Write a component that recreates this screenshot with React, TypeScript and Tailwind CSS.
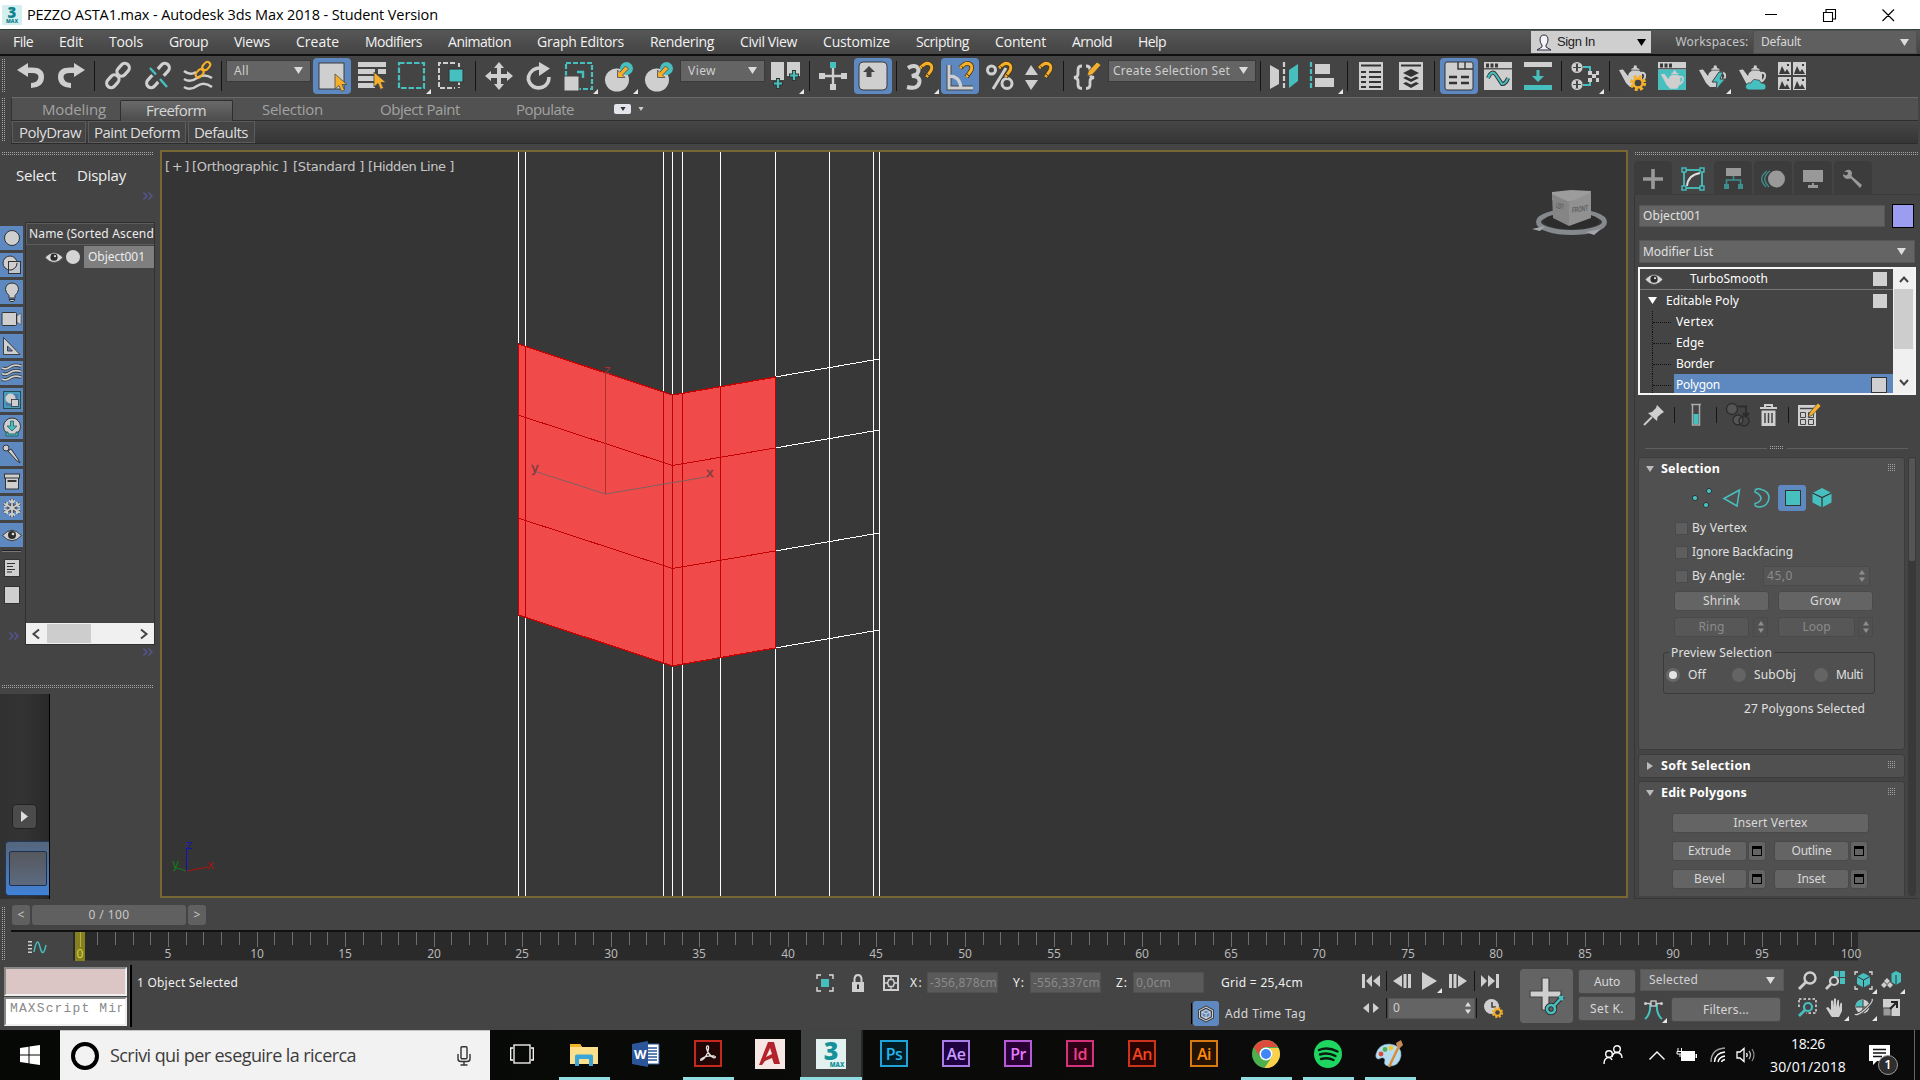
import { useLayoutEffect, useRef, type ReactNode } from 'react';

const G = '#cfcfcf';
const TEAL = '#47bfbf';
const OR = '#f5af2b';
const BG = '#444444';

/** Single-line label whose tracking is adjusted so that it spans `w` pixels. */
function T({ w, className = '', children }: { w: number; className?: string; children: string }) {
  const ref = useRef<HTMLSpanElement>(null);
  useLayoutEffect(() => {
    const el = ref.current;
    if (!el) return;
    el.style.letterSpacing = '0px';
    const natural = el.getBoundingClientRect().width;
    el.style.letterSpacing = `${(w - natural) / children.length}px`;
  }, [w, children]);
  return <span ref={ref} className={`inline-block shrink-0 whitespace-pre ${className}`}>{children}</span>;
}

function I({ children, className = 'w-[28px] h-[28px]', vb = '0 0 28 28' }: { children: ReactNode; className?: string; vb?: string }) {
  return <svg viewBox={vb} className={`block shrink-0 overflow-visible ${className}`} fill="none">{children}</svg>;
}

function Tool({ ml, flyout, children }: { ml: string; flyout?: boolean; children: ReactNode }) {
  return (
    <div className={`relative h-[28px] w-[28px] shrink-0 ${ml}`}>
      <I>{children}</I>
      {flyout && <Fly className="absolute -bottom-[4px] -right-[5px]" />}
    </div>
  );
}
function ToolOn({ ml, children }: { ml: string; children: ReactNode }) {
  return (
    <div className={`flex h-[36px] w-[38px] shrink-0 items-center justify-center rounded-[4px] bg-[#5d89c0] ${ml}`}>
      <I>{children}</I>
    </div>
  );
}
const Fly = ({ className = '' }: { className?: string }) => (
  <svg viewBox="0 0 5 5" className={`h-[5px] w-[5px] ${className}`}><path d="M5 0V5H0Z" fill="#e8e8e8" /></svg>
);
const Sep = ({ ml, h = 'h-[30px]' }: { ml: string; h?: string }) => <div className={`w-px shrink-0 bg-[#141414] ${h} ${ml}`} />;
const Down = ({ className = 'text-[#dcdcdc]' }: { className?: string }) => (
  <svg viewBox="0 0 9 7" className={`h-[7px] w-[9px] shrink-0 ${className}`}><path d="M0 0H9L4.5 7Z" fill="currentColor" /></svg>
);
const GripH = ({ className = '' }: { className?: string }) => (
  <div className={`flex h-[4px] flex-col gap-px ${className}`}>
    <div className="h-px bg-[repeating-linear-gradient(90deg,#a4a4a4_0_1px,#444_1px_2px)]" />
    <div className="h-px bg-[repeating-linear-gradient(90deg,#a4a4a4_0_1px,#444_1px_2px)]" />
  </div>
);
const GripV = ({ className = '' }: { className?: string }) => (
  <div className={`flex w-[4px] shrink-0 gap-px ${className}`}>
    <div className="w-px bg-[repeating-linear-gradient(180deg,#a4a4a4_0_1px,#444_1px_2px)]" />
    <div className="w-px bg-[repeating-linear-gradient(180deg,#a4a4a4_0_1px,#444_1px_2px)]" />
  </div>
);
const Chev = ({ className = '' }: { className?: string }) => (
  <I vb="0 0 10 8" className={`h-[8px] w-[10px] ${className}`}><path d="M.5 .5L4 4L.5 7.5M5.5 .5L9 4L5.5 7.5" stroke="#56569a" strokeWidth="1.3" /></I>
);

const Cursor = ({ x = 16, y = 12 }: { x?: number; y?: number }) => (
  <path transform={`translate(${x} ${y})`} d="M0 0V15L4 11.5L6.5 17.5L9.5 16L7 10.5H12Z" fill={OR} stroke="#4a4a4a" strokeWidth=".8" />
);
const Magnet = ({ x, y }: { x: number; y: number }) => (
  <g transform={`translate(${x} ${y})`}>
    <path d="M2 6L6 2.5Q10 0 13 3Q15 6 12 10L8.5 15" stroke="#4a3510" strokeWidth="4.6" />
    <path d="M2 6L6 2.5Q10 0 13 3Q15 6 12 10L8.5 15" stroke={OR} strokeWidth="3" />
    <path d="M3.6 4.2L5.2 6.2M9 12.2L11.4 14" stroke="#4a3510" strokeWidth="1" />
  </g>
);
const Chain = ({ c = G }: { c?: string }) => (
  <g stroke={c} strokeWidth="3.2">
    <rect x="-4.5" y="-8" width="9" height="14" rx="4.5" transform="translate(18.5 8.5) rotate(42)" />
    <rect x="-4.5" y="-6" width="9" height="14" rx="4.5" transform="translate(9.5 18.5) rotate(42)" />
  </g>
);
const Waves = () => (
  <g stroke={G} strokeWidth="2.6">
    <path d="M0 9Q6 14 12 10" /><path d="M0 17Q6 21 13 16T28 16" /><path d="M0 25Q6 29 13 24T28 25" />
  </g>
);
const Teapot = ({ c = G }: { c?: string }) => (
  <g>
    <path d="M1 5L5 4.5L10 11L11 8L14 5.5H21L24 8V16L20 22H12L8 18Z" fill={c} />
    <path d="M13 4.8Q13 3.5 15.5 3L16 .5H18.5L19 3Q21.5 3.5 22 4.8Z" fill={c} />
    <path d="M22.5 8Q28 7 27 12Q26 16 21.5 17" stroke={c} strokeWidth="2" />
  </g>
);
const Gear = ({ cx, cy, r }: { cx: number; cy: number; r: number }) => (
  <g>
    <circle cx={cx} cy={cy} r={r} stroke={OR} strokeWidth={r * 0.5} strokeDasharray={`${r * 0.45} ${r * 0.335}`} />
    <circle cx={cx} cy={cy} r={r * 0.7} fill="#444" stroke={OR} strokeWidth={r * 0.38} />
  </g>
);
const Place = () => (
  <>
    <ellipse cx="12" cy="18" rx="12" ry="11.5" fill={G} />
    <circle cx="21.5" cy="6.5" r="6.5" fill={TEAL} />
    <path d="M20.5 4L23.5 7L17.5 13L20 15.5H12.5V8L14.8 10.3Z" fill={OR} stroke="#555" strokeWidth=".9" />
  </>
);
const Win = () => (
  <><rect x="0" y="0" width="28" height="28" fill={G} /><path d="M2 1.5h3v4h-3zM6.5 1.5h3v4h-3zM11 1.5h3v4h-3z" fill="#3a3a3a" /><path d="M0 6.8H28" stroke="#3a3a3a" strokeWidth="1.2" /></>
);
const Eye = ({ className = 'h-[11px] w-[18px]' }: { className?: string }) => (
  <I vb="0 0 18 11" className={className}>
    <path d="M0 5.5Q9-4.5 18 5.5Q9 15.5 0 5.5Z" fill="#d6d6d6" stroke="#333" strokeWidth=".6" /><circle cx="9" cy="5.2" r="3.6" fill="#2c2c2c" /><circle cx="10" cy="4.2" r="1.1" fill="#ddd" />
  </I>
);

const MENU: [string, number, string][] = [
  ['File', 20, 'w-[20px]'], ['Edit', 24, 'w-[24px]'], ['Tools', 34, 'w-[34px]'], ['Group', 39, 'w-[39px]'],
  ['Views', 36, 'w-[36px]'], ['Create', 43, 'w-[43px]'], ['Modifiers', 57, 'w-[57px]'], ['Animation', 63, 'w-[63px]'],
  ['Graph Editors', 87, 'w-[87px]'], ['Rendering', 64, 'w-[64px]'], ['Civil View', 57, 'w-[57px]'], ['Customize', 67, 'w-[67px]'],
  ['Scripting', 53, 'w-[53px]'], ['Content', 51, 'w-[51px]'], ['Arnold', 40, 'w-[40px]'], ['Help', 28, 'w-[28px]'],
];

function TitleBar() {
  return (
    <div className="flex h-[29px] items-center bg-white text-black">
      <div className="ml-[2px] flex h-[20px] w-[20px] flex-col items-center bg-[#d5eef0] font-['Open_Sans'] font-extrabold text-[#12838c]">
        <span className="text-[15px] leading-[14px]">3</span>
        <span className="text-[5px] leading-[5px]">MAX</span>
      </div>
      <T w={411} className="ml-[5px] font-['Open_Sans'] text-[14.5px]">PEZZO ASTA1.max - Autodesk 3ds Max 2018 - Student Version</T>
      <I vb="0 0 130 14" className="ml-auto mr-[25px] h-[14px] w-[130px]">
        <g stroke="#000" strokeWidth="1.1">
          <path d="M0 6.5H12M58.500 4.500H67.500V13.500H58.500ZM61 4.500V1.500H70.500V11H67.500M117.500 1.500L129 13M129 1.500L117.500 13" />
        </g>
      </I>
    </div>
  );
}

function MenuBar() {
  return (
    <div className="flex h-[27px] items-center border-b-2 border-[#101010] border-t border-t-[#33443b] bg-gradient-to-b from-[#575757] to-[#444] font-['Open_Sans'] text-[14px] text-[#f2f2f2]">
      <div className="flex gap-[26px] pb-[2px] pl-[13px]">
        {MENU.map(([m, w, c]) => <div key={m} className={c}><T w={w}>{m}</T></div>)}
      </div>
      <div className="ml-auto flex h-[22px] w-[120px] items-center bg-[#cfcfcf] text-[#222]">
        <I vb="0 0 16 17" className="ml-[5px] h-[17px] w-[16px]">
          <path d="M8 1Q12 1 12 6Q12 9 10 11V13L15 16H1L6 13V11Q4 9 4 6Q4 1 8 1Z" fill="#f4f4f8" stroke="#2c2c3c" />
        </I>
        <T w={38} className="ml-[5px] font-['Liberation_Sans'] text-[13px]">Sign In</T>
        <Down className="ml-auto mr-[5px] text-black" />
      </div>
      <div className="flex h-full w-[102px] items-center justify-center pl-[20px] font-['Noto_Sans'] text-[12px] text-[#c4c4c4]"><T w={73}>Workspaces:</T></div>
      <div className="mr-[3px] flex h-[24px] w-[164px] items-center justify-between border border-[#505050] bg-[#5f5f5f] px-[7px] font-['Noto_Sans'] text-[12px] text-[#d8d8d8]"><T w={40}>Default</T><Down /></div>
    </div>
  );
}

function Combo({ cls, w, children }: { cls: string; w: number; children: string }) {
  return (
    <div className={`mb-[10px] flex h-[22px] shrink-0 items-center justify-between border border-[#3a3a3a] bg-[#646464] pb-[1px] pl-[7px] pr-[7px] font-['Noto_Sans'] text-[12px] text-[#cfcfcf] ${cls}`}>
      <T w={w}>{children}</T><Down />
    </div>
  );
}

function MainToolbar() {
  return (
    <div className="flex h-[40px] items-center bg-[#444]">
      <GripV className="ml-[2px] h-[34px]" />
      <Tool ml="ml-[11px]"><path d="M0 8L11 1V5.5H15Q27 5.500 27 15Q27 25 14 26V21Q21.500 20.500 21.500 15Q21.500 11 15 11H11V15Z" fill={G} /></Tool>
      <Tool ml="ml-[12px]"><path d="M28 8L17 1V5.500H13Q1 5.500 1 15Q1 25 14 26V21Q6.500 20.500 6.500 15Q6.500 11 13 11H17V15Z" fill={G} /></Tool>
      <Sep ml="ml-[9px]" />
      <Tool ml="ml-[9px]"><Chain /></Tool>
      <Tool ml="ml-[12px]"><Chain /><path d="M4 2L25 26" stroke={BG} strokeWidth="8" /><path d="M6 6L12 12.500M16 17L23 25" stroke={TEAL} strokeWidth="2.400" /></Tool>
      <Tool ml="ml-[12px]"><Waves /><g transform="translate(10 -1) scale(.64)"><Chain c={OR} /></g></Tool>
      <Sep ml="ml-[9px]" />
      <Combo cls="ml-[4px] w-[85px]" w={15}>All</Combo>
      <ToolOn ml="ml-[2px]"><rect x="1" y="1" width="25" height="26" fill={G} stroke="#3a3a3a" /><Cursor x={17} y={12} /></ToolOn>
      <Tool ml="ml-[7px]"><path d="M0 0H28V5H0ZM0 7H17V12H0ZM0 14H17V19H0ZM0 21H17V26H0ZM20 7H28V12H20Z" fill={G} /><Cursor x={16} y={10} /></Tool>
      <Tool ml="ml-[12px]" flyout><rect x="1" y="1" width="25" height="25" stroke={TEAL} strokeWidth="2.200" strokeDasharray="5.500 2" /></Tool>
      <Tool ml="ml-[12px]"><path d="M17 1H1V26H17" stroke={G} strokeWidth="2" strokeDasharray="5 2" /><path d="M21 1V26" stroke={G} strokeWidth="2" strokeDasharray="4 2" /><rect x="11" y="7" width="14" height="13" fill={TEAL} stroke="#333" /></Tool>
      <Sep ml="ml-[9px]" />
      <Tool ml="ml-[9px]"><path d="M14 0L19 6H16V12H22V9L28 14L22 19V16H16V22H19L14 28L9 22H12V16H6V19L0 14L6 9V12H12V6H9Z" fill={G} /></Tool>
      <Tool ml="ml-[12px]"><path d="M17 6.500Q13 5 8 8Q1 14 4.500 20.500Q9 28 18 25Q24 22 24 15" stroke={G} strokeWidth="3.600" /><path d="M14 0L25 6.500L14 14Z" fill={G} /></Tool>
      <Tool ml="ml-[12px]" flyout><rect x="1" y="1" width="26" height="26" stroke={TEAL} strokeWidth="2.200" strokeDasharray="5 2" /><rect x="-1" y="14" width="15" height="15" fill={G} stroke="#444" /><path d="M12 10H18V16" stroke={TEAL} strokeWidth="2.400" /></Tool>
      <Tool ml="ml-[12px]" flyout><Place /></Tool>
      <Tool ml="ml-[12px]"><Place /></Tool>
      <Combo cls="ml-[7px] w-[85px]" w={28}>View</Combo>
      <Tool ml="ml-[6px]" flyout><path d="M0 0H13V18H0ZM16 0H29V14H16Z" fill={G} /><path d="M7 16V27M2 21.500H12M23 8V19M18 13.500H28" stroke="#333" strokeWidth="4" /><path d="M7 17V26M3 21.500H11M23 9V18M19 13.500H27" stroke={TEAL} strokeWidth="2.200" /></Tool>
      <Sep ml="ml-[10px]" />
      <Tool ml="ml-[9px]"><path d="M14 3V25M3 14H25" stroke={G} strokeWidth="2.400" /><path d="M0 11H6V17H0ZM22 11H28V17H22ZM11 22H17V28H11Z" fill={G} /><rect x="11" y="0" width="6" height="6" fill={TEAL} /></Tool>
      <ToolOn ml="ml-[7px]"><rect x="0" y="0" width="28" height="28" rx="4" fill={G} stroke="#3a3a3a" /><path d="M10 4L16 10H12.500V15H7.500V10H4Z" fill="#444" /></ToolOn>
      <Sep ml="ml-[4px]" />
      <Tool ml="ml-[9px]" flyout><path d="M2 6Q7 2.500 11 5Q14 8 11 12L6 14Q14 14 13.500 20Q12 28 1 25" stroke={G} strokeWidth="4" /><Magnet x={12} y={0} /></Tool>
      <ToolOn ml="ml-[7px]"><path d="M3 3V26H27" stroke="#444" strokeWidth="5" /><path d="M3 3V26H27M3 14Q14 14 15 26" stroke={G} strokeWidth="3" /><Magnet x={12} y={0} /></ToolOn>
      <Tool ml="ml-[7px]"><circle cx="5.500" cy="8" r="4" stroke={G} strokeWidth="3" /><circle cx="21" cy="21.500" r="5" stroke={G} strokeWidth="3" /><path d="M20 6L7 27" stroke={G} strokeWidth="3" /><Magnet x={11} y={0} /></Tool>
      <Tool ml="ml-[11px]"><path d="M6 3L13 13H0ZM0 18H13L6 28Z" fill={G} /><Magnet x={12} y={0} /></Tool>
      <Sep ml="ml-[10px]" />
      <Tool ml="ml-[9px]"><path d="M9 4Q5 4 5 8V12Q5 15 1 15.500Q5 16 5 19V23Q5 26.500 9 26.500M13 4Q17 4 17 8V12Q17 15 21 15.500Q17 16 17 19V23Q17 26.500 13 26.500" stroke={G} strokeWidth="2.800" /><path d="M14 14L15.500 9L24 0L28 3L19.500 12.500Z" fill={OR} stroke="#444" strokeWidth=".8" /></Tool>
      <Combo cls="ml-[7px] w-[148px] !pl-[4px]" w={117}>Create Selection Set</Combo>
      <Sep ml="ml-[4px]" />
      <Tool ml="ml-[9px]"><path d="M0 3L9 8V22L0 27Z" fill={G} /><path d="M14 0V28" stroke={G} strokeWidth="2.200" strokeDasharray="5 2" /><path d="M19 8L28 2V19L19 26Z" fill={TEAL} /></Tool>
      <Tool ml="ml-[12px]" flyout><path d="M1 0V28" stroke={TEAL} strokeWidth="2.200" strokeDasharray="5 2" /><path d="M5 2H20V12H5ZM5 16H24V25H5Z" fill={G} /></Tool>
      <Sep ml="ml-[9px]" />
      <Tool ml="ml-[9px]"><rect x="2" y="0" width="24" height="28" fill={G} /><path d="M4 3.500H24" stroke="#333" strokeWidth="2" /><path d="M4 10H9M12 10H24M4 15H9M12 15H24M4 20H9M12 20H24M4 25H9M12 25H24" stroke="#333" strokeWidth="2" /></Tool>
      <Tool ml="ml-[12px]"><rect x="2" y="0" width="24" height="28" fill={G} /><path d="M4 3.500H24" stroke="#333" strokeWidth="2" /><path d="M14 7L22 11L14 15L6 11ZM6 16L9 14.500L14 17L19 14.500L22 16L14 20ZM6 21.500L9 20L14 22.500L19 20L22 21.500L14 26Z" fill="#333" /></Tool>
      <Sep ml="ml-[9px]" />
      <ToolOn ml="ml-[5px]"><rect x="0" y="0" width="28" height="28" rx="2" fill={G} stroke="#333" /><path d="M13 0V7H28M20 0V7" stroke="#333" strokeWidth="1.400" /><path d="M4 15H12M16 15H24M4 21H12M16 21H24" stroke="#333" strokeWidth="2.600" /></ToolOn>
      <Tool ml="ml-[6px]"><Win /><path d="M4 16Q8 7 12 13T18 22Q22 22 24 16" stroke="#333" strokeWidth="4" /><path d="M4 16Q8 7 12 13T18 22Q22 22 24 16" stroke={TEAL} strokeWidth="2.200" /></Tool>
      <Tool ml="ml-[12px]"><rect width="28" height="5" fill={G} /><rect y="23" width="28" height="5" fill={TEAL} /><path d="M12.500 8H15.500V14H20L14 20L8 14H12.500Z" fill={TEAL} /></Tool>
      <Sep ml="ml-[9px]" />
      <Tool ml="ml-[9px]" flyout><g stroke={TEAL} strokeWidth="2"><path d="M12 5H19V11M12 23H19V17" /></g><circle cx="6" cy="5.500" r="4.800" fill="#444" stroke={G} strokeWidth="1.600" /><circle cx="6" cy="22.500" r="4.800" fill="#444" stroke={G} strokeWidth="1.600" /><path d="M2 2H5V5H2ZM7 6H10V9H7ZM7 2H10V5H7ZM2 6H5V9H2ZM2 19H5V22H2ZM7 23H10V26H7ZM7 19H10V22H7ZM2 23H5V26H2ZM17 9H21V13H17ZM25 9H28V13H25ZM21 12H25V16H21ZM17 16H21V20H17ZM25 16H28V20H25Z" fill={G} /></Tool>
      <Sep ml="ml-[10px]" />
      <Tool ml="ml-[8px]"><g transform="translate(0 3)"><Teapot /></g><Gear cx={20} cy={21} r={6.500} /></Tool>
      <Tool ml="ml-[12px]"><Win /><rect y="7.500" width="28" height="20.500" fill={TEAL} /><g transform="translate(2 8) scale(.85)"><Teapot /></g></Tool>
      <Tool ml="ml-[12px]" flyout><g transform="translate(0 3)"><Teapot /></g><path d="M21 10L14 20H19L18 28L27 17H22L25 10Z" fill={TEAL} stroke="#444" /></Tool>
      <Tool ml="ml-[12px]"><g transform="translate(0 3)"><Teapot /></g><path d="M11 28Q6 27 8 23Q10 20 13 21Q15 16 19 18Q22 17 23 21Q28 21 28 25Q28 28 25 28Z" fill={TEAL} stroke="#444" strokeWidth=".8" /></Tool>
      <Tool ml="ml-[12px]"><path d="M0 0H13V13H0ZM15 0H28V13H15ZM0 15H13V28H0ZM15 15H28V28H15Z" fill={G} /><path d="M1 12L4 4L7 10L9 7L12 12ZM16 12L19 4L22 10L24 7L27 12ZM1 27L4 19L7 25L9 22L12 27ZM16 27L19 19L22 25L24 22L27 27Z" fill="#3a3a3a" /><path d="M9 2h2v2h-2zM24 2h2v2h-2zM9 17h2v2h-2zM24 17h2v2h-2z" fill="#3a3a3a" /></Tool>
    </div>
  );
}

function Ribbon() {
  return (
    <div className="flex h-[48px] bg-[#444] pt-[1px] font-['Open_Sans']">
      <GripV className="ml-[2px] mt-[1px] h-[44px]" />
      <div className="ml-[5px] mr-[2px] flex-1">
        <div className="flex h-[24px] border-b border-l border-t border-b-[#2e2e2e] border-l-[#333] border-t-[#6a6a6a] bg-[#515151] text-[15px] leading-[23px] text-[#a2a2a2]">
          <div className="w-[108px] pl-[30px]"><T w={64}>Modeling</T></div>
          <div className="mt-[2px] h-[22px] w-[113px] rounded-t-[2px] border border-b-0 border-[#2e2e2e] bg-gradient-to-b from-[#6a6a6a] to-[#4a4a4a] pl-[25px] leading-[18px] text-[#d6d6d6]"><T w={60}>Freeform</T></div>
          <div className="w-[118px] pl-[29px]"><T w={61}>Selection</T></div>
          <div className="w-[136px] pl-[29px]"><T w={80}>Object Paint</T></div>
          <div className="w-[115px] pl-[29px]"><T w={58}>Populate</T></div>
          <div className="ml-[12px] mt-[6px] flex h-[10px] w-[17px] items-center justify-center rounded-[2px] bg-[#e4e4ec]"><Down className="!h-[4px] !w-[6px] text-[#333]" /></div>
          <Down className="ml-[7px] mt-[9px] !h-[4px] !w-[6px] text-[#ccc]" />
        </div>
        <div className="flex h-[23px] gap-[2px] border-b border-[#2c2c2c] bg-gradient-to-b from-[#474747] to-[#353535] pl-[1px] text-[15px] leading-[20px] text-[#dedede]">
          <div className="h-[22px] w-[74px] border border-[#5c5c5c] bg-[#444] pl-[6px]"><T w={62}>PolyDraw</T></div>
          <div className="h-[22px] w-[98px] border border-[#5c5c5c] bg-[#444] pl-[5px]"><T w={86}>Paint Deform</T></div>
          <div className="h-[22px] w-[67px] border border-[#5c5c5c] bg-[#444] pl-[5px]"><T w={54}>Defaults</T></div>
        </div>
      </div>
    </div>
  );
}

const FILTERS: ReactNode[] = [
  <circle cx="12" cy="12" r="7.500" fill={G} stroke="#333" />,
  <><circle cx="10" cy="10" r="7" fill={G} stroke="#333" /><rect x="8.500" y="8.500" width="12" height="12" fill={G} fillOpacity=".85" stroke="#333" /><path d="M17 10A7 7 0 0 1 9 17" stroke="#333" /></>,
  <><path d="M12 3Q18.500 3.500 18.500 9.500Q18 13 15 15.500V18H9V15.500Q6 13 5.500 9.500Q5.500 3.500 12 3Z" fill={G} stroke="#333" /><path d="M9 19.500H15L13.500 21.500H10.500Z" fill={G} stroke="#333" /></>,
  <><rect x="2" y="5.500" width="14.500" height="13" rx="1" fill={G} stroke="#333" /><path d="M17 9L21 6V18L17 15Z" fill={G} stroke="#333" strokeWidth=".5" /></>,
  <path d="M3.500 3.500L20 20.500H3.500ZM7.500 12V17H12.500Z" fill={G} fillRule="evenodd" stroke="#333" strokeWidth=".9" />,
  <g><g stroke="#333" strokeWidth="3.400"><path d="M2 7Q6 9 10 6T21 5M2 12.500Q6 14.500 10 11.500T21 10.500M2 18Q6 20 10 17T21 16" /></g><g stroke={G} strokeWidth="1.800"><path d="M2 7Q6 9 10 6T21 5M2 12.500Q6 14.500 10 11.500T21 10.500M2 18Q6 20 10 17T21 16" /></g></g>,
  <><rect x="3.500" y="3.500" width="17" height="17" fill="#4b79ad" stroke="#1f4f55" /><rect x="5" y="5" width="14" height="14" stroke={TEAL} /><circle cx="10.500" cy="10.500" r="5" fill={G} /><rect x="11.500" y="11.500" width="7" height="7" fill={G} stroke="#333" strokeWidth=".8" /></>,
  <><circle cx="12" cy="11.500" r="8.500" fill={G} stroke="#333" /><path d="M10.500 6H13.500V11H17L12 16L7 11H10.500Z" fill={TEAL} stroke="#1f4f55" strokeWidth=".7" /><path d="M6 17H8V19H16V17H18V21H6Z" fill={TEAL} stroke="#1f4f55" strokeWidth=".8" /></>,
  <><path d="M8 9L11 7L18 17L20 21L16 18Z" fill={G} stroke="#333" /><circle cx="6" cy="6" r="3" fill={G} stroke="#333" /></>,
  <><rect x="5.500" y="8" width="13" height="12" fill={G} stroke="#333" /><rect x="4.500" y="5" width="15" height="4" fill={G} stroke="#333" /><path d="M7.500 12H16.500" stroke="#333" strokeWidth="2" /></>,
  <g><g stroke="#444" strokeWidth="3.600"><path d="M12 3V21M4 7.500L20 16.500M4 16.500L20 7.500" /></g><g stroke={G} strokeWidth="1.800"><path d="M12 3V21M4 7.500L20 16.500M4 16.500L20 7.500M9 4.500L12 7L15 4.500M9 19.500L12 17L15 19.500M4 11L7.500 9.500L7 6M20 11L16.500 9.500L17 6M4 13L7.500 14.500L7 18M20 13L16.500 14.500L17 18" /></g></g>,
  <><path d="M2.500 12.500Q12 2 21.500 12.500Q12 23 2.500 12.500Z" fill={G} stroke="#333" /><circle cx="12" cy="12" r="4" fill="#2c2c2c" /><circle cx="13" cy="11" r="1.300" fill="#ddd" /></>,
];

function LeftPanel() {
  return (
    <div className="flex w-[160px] shrink-0 flex-col font-['Noto_Sans'] text-[#ececec]">
      <GripH className="ml-[2px] mt-[8px] w-[151px]" />
      <div className="mt-[8px] flex h-[22px] items-center font-['Open_Sans'] text-[15px] text-[#f0f0f0]">
        <T w={40} className="ml-[16px]">Select</T><T w={49} className="ml-[21px]">Display</T>
      </div>
      <Chev className="ml-[143px] mt-[6px]" />
      <div className="mt-[22px] flex h-[423px]">
        <div className="mt-[4px] w-[25px]">
          {FILTERS.map((f, i) => <div key={i} className="mb-[3px] h-[24px] w-[23px] bg-[#5d89c0]"><I vb="0 0 24 24" className="h-[24px] w-[24px]">{f}</I></div>)}
          <div className="ml-[2px] mt-[1px] h-[2px] w-[19px] border-t border-[#222] bg-[#777]" />
          <I vb="0 0 16 18" className="ml-[4px] mt-[7px] h-[18px] w-[16px]"><rect x=".5" y=".5" width="15" height="17" fill={G} stroke="#333" /><path d="M3 4.500H11M3 7.500H9M3 10.500H11M3 13H8" stroke="#333" /></I>
          <div className="ml-[4px] mt-[9px] h-[18px] w-[16px] border border-[#333] bg-[#cfcfcf]" />
          <Chev className="ml-[9px] mt-[28px]" />
        </div>
        <div className="flex w-[130px] flex-col overflow-hidden border border-[#303030] text-[12px]">
          <div className="h-[22px] overflow-hidden border border-r-0 border-[#5c5c5c] pl-[2px] leading-[19px]"><T w={125}>Name (Sorted Ascend</T></div>
          <div className="mt-[1px] flex h-[22px] items-center">
            <Eye className="ml-[19px] h-[11px] w-[18px]" />
            <div className="ml-[3px] h-[14px] w-[14px] rounded-full bg-[#d4d4d4]" />
            <div className="ml-[4px] h-[22px] flex-1 bg-[#7f7f7f] pl-[4px] leading-[22px]"><T w={57}>Object001</T></div>
          </div>
          <div className="mt-auto flex h-[21px] items-center bg-[#f0f0f0]">
            <I vb="0 0 8 10" className="ml-[6px] h-[10px] w-[8px]"><path d="M7 .5L1.500 5L7 9.500" stroke="#444" strokeWidth="2" /></I>
            <div className="ml-[7px] h-[19px] w-[44px] bg-[#cdcdcd]" />
            <I vb="0 0 8 10" className="ml-auto mr-[6px] h-[10px] w-[8px]"><path d="M1 .5L6.500 5L1 9.500" stroke="#444" strokeWidth="2" /></I>
          </div>
        </div>
      </div>
      <Chev className="ml-[143px] mt-[3px]" />
      <GripH className="ml-[2px] mt-[29px] w-[151px]" />
      <div className="mt-[5px] flex w-[50px] flex-1 flex-col border-r border-black bg-gradient-to-r from-[#313131] via-[#333] to-[#292929]">
        <div className="ml-[12px] mt-[110px] flex h-[25px] w-[25px] items-center justify-center rounded-[4px] border border-[#222] bg-[#4b4b4b]"><I vb="0 0 7 11" className="h-[11px] w-[7px]"><path d="M0 0L7 5.500L0 11Z" fill="#ddd" /></I></div>
        <div className="ml-[5px] mt-[12px] h-[55px] rounded-l-[4px] border border-r-0 border-[#24385a] bg-gradient-to-b from-[#55657c] to-[#3f82d8] pl-[3px] pt-[9px]"><div className="h-[35px] w-[38px] rounded-[2px] border border-[#20304a] bg-gradient-to-b from-[#55585e] to-[#5c6a80]" /></div>
      </div>
    </div>
  );
}

const VX = [518.5, 525.5, 663.5, 672.5, 682.5, 720.5, 775.5, 829.5, 873.5, 879.5];
const VR = [[518.5, 344, 615], [525.5, 346, 617], [663.5, 392, 663], [672.5, 395, 666], [682.5, 393, 664], [720.5, 387, 658], [775.5, 377, 648]];

function Viewport() {
  return (
    <div className="relative mb-[1px] mt-[6px] w-[1468px] shrink-0 overflow-hidden border-2 border-[#776735] bg-[#353535]">
      <svg viewBox="162 152 1464 745" className="absolute inset-0 h-[745px] w-[1464px]" fill="none">
        <rect x="518" y="150" width="362" height="750" fill="#383838" />
        <g stroke="#fff" strokeWidth="1" shapeRendering="crispEdges">
          {VX.map((x) => <path key={x} d={`M${x} 150V900`} />)}
          {[377, 448, 551, 648].map((y) => <path key={y} d={`M775 ${y}L879 ${y - 18}`} />)}
        </g>
        <path d="M518 344L672.500 395L776 377V648L672.500 666L518 615Z" fill="#f04a4a" />
        <g stroke="#c40000" strokeWidth="1" shapeRendering="crispEdges">
          <path d="M518.500 344L672.500 395L775.500 377V648L672.500 666L518.500 615Z" strokeWidth="1.300" />
          <path d="M518 415L672.500 465.500L775 448M518 518L672.500 568.500L775 551" />
          {VR.map(([x, a, b]) => <path key={x} d={`M${x} ${a}V${b}`} />)}
        </g>
        <path d="M605.500 372V494" stroke="#b03030" />
        <path d="M534 471L605.500 494L706 477" stroke="#806060" />
        <g fontFamily="DejaVu Sans" fontSize="13">
          <text x="531" y="472" fill="#7a4040" stroke="#7a4040" strokeWidth=".4">y</text><text x="706" y="477" fill="#7a4040" stroke="#7a4040" strokeWidth=".4">x</text><text x="604" y="374" fontSize="12" fill="#b03030">z</text>
          <text x="186" y="849" fontSize="12" fill="#1515b0">z</text><text x="172" y="868" fontSize="12" fill="#157a15">y</text><text x="207" y="869" fontSize="12" fill="#a01515">x</text>
        </g>
        <path d="M186.500 871V848" stroke="#1010c0" /><path d="M187 871L208 867" stroke="#b01010" /><path d="M186 871L174 867" stroke="#108010" />
        <ellipse cx="1571.500" cy="222" rx="33" ry="10.500" stroke="#85888c" strokeWidth="5" />
        <ellipse cx="1571.500" cy="221" rx="28" ry="8" fill="#2c2c2c" />
        <path d="M1532 229L1545 226L1540 231ZM1601 229L1594 235L1586 232Z" fill="#a4a7aa" />
        <path d="M1552 192L1571 190L1591 191L1590 199L1568 202L1552 200Z" fill="#9c9c9c" />
        <path d="M1552 194L1569 202V226L1553 218Z" fill="#858585" />
        <path d="M1569 202L1591 193V218L1569 226Z" fill="#919191" />
        <g fontFamily="Liberation Sans" fontSize="8" fontWeight="700" fill="#5e5e5e">
          <text transform="translate(1556 208) skewY(14)" textLength="8" lengthAdjust="spacingAndGlyphs">LEFT</text><text transform="translate(1572 213) skewY(-9)" textLength="16" lengthAdjust="spacingAndGlyphs">FRONT</text>
        </g>
      </svg>
      <div className="relative flex pl-[3px] pt-[5px] font-['DejaVu_Sans'] text-[13px] leading-[19px] text-[#c6c6c6]">
        <T w={23}>[ + ]</T><T w={95} className="ml-[4px]">[Orthographic ]</T><T w={71} className="ml-[6px]">[Standard ]</T><T w={86} className="ml-[4px]">[Hidden Line ]</T>
      </div>
    </div>
  );
}

const TABS: ReactNode[] = [
  <path d="M2 12H22M12 2V22" stroke="#999" strokeWidth="3.600" />,
  <><rect x="3" y="3" width="18" height="18" stroke={TEAL} strokeWidth="1.800" /><path d="M6 19Q7 8 19 6" stroke="#e0e0e0" strokeWidth="2" /><g fill="#444" stroke={TEAL} strokeWidth="1.400"><rect x="1" y="1" width="4" height="4" /><rect x="19" y="1" width="4" height="4" /><rect x="1" y="19" width="4" height="4" /><rect x="19" y="19" width="4" height="4" /></g></>,
  <><rect x="5" y="1" width="15" height="8" fill="#999" /><path d="M12.500 9V13M5.500 18V13H19.500V18" stroke="#3f8e8e" strokeWidth="1.600" /><path d="M3 17H8V22H3ZM17 17H22V22H17Z" fill="#3f8e8e" /></>,
  <><circle cx="15.500" cy="12" r="8.500" fill="#999" /><path d="M9 4Q-1 11 8 20M6 4Q-4 11 5 20" stroke="#3f8e8e" strokeWidth="1.300" /></>,
  <><rect x="2" y="3" width="20" height="12" fill="#999" /><path d="M11 16H13V18H17V21H7V18H11Z" fill="#999" /></>,
  <path d="M3 4.500L6 3Q10 2 11 6L10.500 9L21 18L19 21L10 11.500L6 12Q2 11 2 7L5 8.500L7 7L6.500 5Z" fill="#999" />,
];

function Btn({ cls, w, dim, children }: { cls: string; w: number; dim?: boolean; children: string }) {
  return <div className={`flex h-[20px] shrink-0 items-center justify-center rounded-[3px] border border-[#4a4a4a] ${dim ? 'bg-[#575757] text-[#8b8b8b]' : 'bg-[#646464] text-[#d8d8d8]'} ${cls}`}><T w={w}>{children}</T></div>;
}
const Spin = ({ className = '' }: { className?: string }) => (
  <I vb="0 0 6 12" className={`h-[12px] w-[6px] ${className}`}><path d="M3 0L6 4.500H0ZM0 7.500H6L3 12Z" fill="#8e8e8e" /></I>
);
const Dots = () => (
  <I vb="0 0 8 7" className="mb-[3px] ml-auto mr-[8px] h-[7px] w-[8px]">
    <path d="M0 .5H8M0 2.500H8M0 4.500H8M0 6.500H8" stroke="#a0a0a0" strokeDasharray="1 1" />
  </I>
);
function Head({ w, open, children }: { w: number; open?: boolean; children: string }) {
  return (
    <div className="flex h-[22px] items-center font-bold text-white">
      <I vb="0 0 8 8" className="ml-[7px] h-[8px] w-[8px]"><path d={open ? 'M0 1H8L4 7Z' : 'M1 0V8L7 4Z'} fill="#bbb" /></I>
      <T w={w} className="ml-[7px] text-[12.5px]">{children}</T><Dots />
    </div>
  );
}
const Box = () => <div className="flex h-[20px] w-[18px] items-center justify-center rounded-[3px] border border-[#4a4a4a] bg-[#646464]"><div className="h-[10px] w-[10px] border border-t-[3px] border-black" /></div>;
const TSep = ({ ml }: { ml: string }) => <div className={`h-[16px] w-px bg-[#151515] ${ml}`} />;

function CommandPanel() {
  return (
    <div className="ml-[6px] flex w-[285px] shrink-0 flex-col font-['Noto_Sans'] text-[12px] text-[#e0e0e0]">
      <GripH className="ml-[1px] mt-[8px] w-[283px]" />
      <div className="mt-[5px] flex h-[33px] gap-[2px]">
        {TABS.map((t, i) => <div key={i} className={`flex w-[38px] items-center justify-center rounded-t-[4px] pt-[3px] ${i === 1 ? 'bg-[#444]' : 'bg-[#3c3c3c]'}`}><I vb="0 0 24 24" className="h-[24px] w-[24px]">{t}</I></div>)}
      </div>
      <div className="flex flex-1 flex-col overflow-hidden border border-b-[#363636] border-l-[#363636] border-r-transparent border-t-[#3c3c3c] pl-[4px]">
        <div className="mt-[9px] flex h-[24px] items-center">
          <div className="h-[22px] w-[246px] border border-[#565656] bg-[#646464] pl-[3px] leading-[20px]"><T w={58}>Object001</T></div>
          <div className="ml-[7px] h-[24px] w-[22px] border border-black bg-[#9c9cf0]" />
        </div>
        <div className="mt-[12px] flex h-[23px] w-[276px] items-center justify-between border border-[#565656] bg-[#646464] pl-[3px] pr-[8px]"><T w={70}>Modifier List</T><Down /></div>
        <div className="-ml-[1px] mt-[4px] flex h-[128px] w-[278px] border-2 border-[#f4f4f4] text-white">
          <div className="flex-1 overflow-hidden">
            <div className="flex h-[21px] items-center border-b border-[#777]"><Eye className="ml-[5px] h-[11px] w-[18px]" /><T w={78} className="ml-[27px]">TurboSmooth</T><div className="ml-auto mr-[6px] h-[14px] w-[14px] bg-[#d0d0d0]" /></div>
            <div className="flex h-[21px] items-center"><Down className="ml-[8px]" /><T w={73} className="ml-[9px]">Editable Poly</T><div className="ml-auto mr-[6px] h-[14px] w-[14px] bg-[#d0d0d0]" /></div>
            {([['Vertex', 38], ['Edge', 28], ['Border', 38], ['Polygon', 44]] as [string, number][]).map(([n, w]) => (
              <div key={n} className="flex h-[21px]">
                <div className="ml-[12px] h-[21px] w-[1px] border-l border-dotted border-[#111]" />
                <div className="mr-[3px] mt-[11px] h-0 w-[18px] border-t border-dotted border-[#111]" />
                <div className={`flex flex-1 items-center pl-[2px] ${n === 'Polygon' ? 'bg-[#5d89c0]' : ''}`}><T w={w}>{n}</T>{n === 'Polygon' && <div className="ml-auto mr-[6px] h-[16px] w-[16px] border border-[#333] bg-[#d0d0d0]" />}</div>
              </div>
            ))}
          </div>
          <div className="flex w-[21px] flex-col items-center bg-[#f0f0f0]">
            <I vb="0 0 10 7" className="mt-[7px] h-[7px] w-[10px]"><path d="M1 6L5 1.500L9 6" stroke="#444" strokeWidth="2" /></I>
            <div className="mt-[6px] h-[60px] w-[19px] bg-[#cdcdcd]" />
            <I vb="0 0 10 7" className="mb-[7px] mt-auto h-[7px] w-[10px]"><path d="M1 1L5 5.500L9 1" stroke="#444" strokeWidth="2" /></I>
          </div>
        </div>
        <div className="mt-[8px] flex h-[24px] items-center">
          <I vb="0 0 20 20" className="ml-[5px] h-[20px] w-[20px]"><path d="M13 0L20 7L17.500 8.500L13.500 12L13 16L4 8L8 7L12 3Z" fill={G} /><path d="M8 12L0 20" stroke={G} strokeWidth="1.800" /></I>
          <TSep ml="ml-[10px]" />
          <I vb="0 0 10 24" className="ml-[16px] h-[24px] w-[10px]"><path d="M0 1.500H10M1.500 2V22H8.500V2" stroke="#aaa" strokeWidth="1.500" /><rect x="2.500" y="11" width="5" height="10" fill={TEAL} /></I>
          <TSep ml="ml-[15px]" />
          <I vb="0 0 24 24" className="ml-[9px] h-[24px] w-[24px]"><g fill="#555" stroke="#2c2c2c" strokeWidth="1.300"><circle cx="6" cy="6" r="5.500" /><path d="M12 3.500H20V12M17 10L20 13L23 10" fill="none" strokeWidth="2" /><circle cx="12" cy="17" r="5" /><circle cx="18" cy="18" r="5" fill="none" /></g></I>
          <I vb="0 0 17 22" className="ml-[10px] h-[22px] w-[17px]"><path d="M5 3V1H12V3M0 4H17" stroke={G} strokeWidth="2" /><path d="M1.500 6.500H15.500V22H1.500Z" fill={G} /><path d="M5 9V19M8.500 9V19M12 9V19" stroke="#444" strokeWidth="1.500" /></I>
          <TSep ml="ml-[11px]" />
          <I vb="0 0 23 24" className="ml-[9px] h-[24px] w-[23px]"><path d="M0 2H18V23H0Z" fill={G} /><path d="M2 5.500H16" stroke="#444" strokeWidth="1.400" /><g stroke="#444"><path d="M2.500 9.500H7.500V14.500H2.500ZM10.500 9.500H15.500V14.500H10.500ZM2.500 16.500H7.500V21.500H2.500ZM10.500 16.500H15.500V21.500H10.500Z" /></g><path d="M10 14L12 9L20 0L23 3L14.500 12Z" fill={OR} stroke="#444" strokeWidth=".7" /></I>
        </div>
        <div className="mt-[19px] flex h-[4px] items-center"><div className="ml-[6px] h-px w-[122px] bg-[#5f5f5f]" /><GripH className="ml-[3px] w-[13px]" /><div className="ml-[4px] h-px w-[121px] bg-[#5f5f5f]" /></div>
        <div className="mt-[7px] flex flex-1">
          <div className="-ml-[1px] w-[267px]">
            <div className="h-[293px] rounded-[3px] border border-[#3c3c3c] bg-[#505050]">
              <Head w={59} open>Selection</Head>
              <div className="mt-[5px] flex h-[26px] items-center">
                <I vb="0 0 20 20" className="ml-[53px] h-[20px] w-[20px]"><g fill={TEAL} stroke="#333"><circle cx="3" cy="10" r="2.600" /><circle cx="17" cy="3" r="2.600" /><circle cx="14" cy="17" r="2.600" /></g></I>
                <I vb="0 0 18 18" className="ml-[11px] h-[18px] w-[18px]"><path d="M1 9.500L16.500 1L14 17Z" stroke={TEAL} strokeWidth="1.500" /></I>
                <I vb="0 0 16 20" className="ml-[13px] h-[20px] w-[16px]"><path d="M1 4Q1 0 6 1Q15 3 15 10Q14 18 6 19Q0 19 1 15.500Q7 14 7 10Q6 6 1 4Z" stroke={TEAL} strokeWidth="1.500" /></I>
                <div className="ml-[8px] flex h-[26px] w-[28px] items-center justify-center rounded-[3px] bg-[#5d89c0] pl-[2px]"><div className="h-[16px] w-[16px] border border-[#333] bg-[#47bfbf]" /></div>
                <I vb="0 0 20 20" className="ml-[6px] h-[20px] w-[20px]"><path d="M10 0L19.500 5V14.500L10 19.500L.5 14.500V5Z" fill={TEAL} /><path d="M.5 5L10 9.500L19.500 5M10 9.500V19.500" stroke="#333" strokeWidth="1.200" /></I>
              </div>
              {([['By Vertex', 55], ['Ignore Backfacing', 101], ['By Angle:', 53]] as [string, number][]).map(([n, w], i) => (
                <div key={n} className={`flex h-[20px] items-center ${i ? 'mt-[4px]' : 'mt-[7px]'}`}>
                  <div className="ml-[36px] mr-[4px] h-[13px] w-[13px] border border-[#4a4a4a] bg-[#5e5e5e]" /><T w={w}>{n}</T>
                  {i === 2 && <div className="ml-[18px] flex h-[20px] w-[107px] items-center justify-between border border-[#4a4a4a] bg-[#555] pl-[3px] pr-[4px] text-[#8b8b8b]"><T w={26}>45,0</T><Spin /></div>}
                </div>
              ))}
              <div className="mt-[5px] flex"><Btn cls="ml-[35px] w-[95px]" w={37}>Shrink</Btn><Btn cls="ml-[9px] w-[95px]" w={31}>Grow</Btn></div>
              <div className="mt-[6px] flex">
                <Btn dim cls="ml-[35px] w-[75px]" w={26}>Ring</Btn><div className="ml-[4px] flex h-[20px] w-[15px] items-center justify-center border border-[#4a4a4a]"><Spin /></div>
                <Btn dim cls="ml-[10px] w-[77px]" w={28}>Loop</Btn><div className="ml-[3px] flex h-[20px] w-[15px] items-center justify-center border border-[#4a4a4a]"><Spin /></div>
              </div>
              <fieldset className="ml-[24px] mt-[7px] h-[50px] w-[212px] rounded-[3px] border border-[#3a3a3a] pl-[2px]">
                <legend className="ml-[3px] h-[17px] px-[2px] leading-[17px]"><T w={101}>Preview Selection</T></legend>
                <div className="mt-[4px] flex h-[20px] items-center">
                  <div className="flex h-[14px] w-[14px] items-center justify-center rounded-full bg-[#686868]"><div className="h-[8px] w-[8px] rounded-full bg-[#e4e4e4]" /></div><T w={18} className="ml-[8px]">Off</T>
                  <div className="ml-[26px] h-[14px] w-[14px] rounded-full bg-[#646464]" /><T w={42} className="ml-[8px]">SubObj</T>
                  <div className="ml-[18px] h-[14px] w-[14px] rounded-full bg-[#646464]" /><T w={27} className="ml-[8px]">Multi</T>
                </div>
              </fieldset>
              <div className="ml-[105px] mt-[6px]"><T w={121}>27 Polygons Selected</T></div>
            </div>
            <div className="mt-[4px] h-[24px] rounded-[3px] border border-[#3c3c3c] bg-[#505050]"><Head w={90}>Soft Selection</Head></div>
            <div className="mt-[3px] h-[115px] rounded-t-[3px] border border-b-0 border-[#3c3c3c] bg-[#505050]">
              <Head w={86} open>Edit Polygons</Head>
              <Btn cls="ml-[33px] mt-[9px] w-[197px]" w={74}>Insert Vertex</Btn>
              <div className="ml-[33px] mt-[8px] flex"><Btn cls="w-[75px]" w={43}>Extrude</Btn><div className="ml-[1px]"><Box /></div><Btn cls="ml-[8px] w-[75px]" w={40}>Outline</Btn><div className="ml-[1px]"><Box /></div></div>
              <div className="ml-[33px] mt-[8px] flex"><Btn cls="w-[75px]" w={31}>Bevel</Btn><div className="ml-[1px]"><Box /></div><Btn cls="ml-[8px] w-[75px]" w={28}>Inset</Btn><div className="ml-[1px]"><Box /></div></div>
            </div>
          </div>
          <div className="ml-[3px] h-[439px] w-[8px] rounded-[4px] bg-[#393939]"><div className="h-[105px] rounded-[3px] border border-[#3a3a3a] bg-[#555]" /></div>
        </div>
      </div>
    </div>
  );
}

function TimeTrack() {
  const frames = Array.from({ length: 101 }, (_, i) => i);
  return (
    <div className="flex h-[64px] pt-[4px] font-['Noto_Sans'] text-[12px] text-[#c8c8c8]">
      <GripV className="ml-[2px] mt-[4px] h-[54px]" />
      <div className="ml-[5px] flex-1">
        <div className="ml-[1px] mt-[2px] flex h-[20px] gap-[2px] text-center leading-[20px]">
          <div className="w-[18px] rounded-[3px] bg-[#606060]">&lt;</div><div className="w-[154px] rounded-[3px] bg-[#606060]"><T w={41}>0 / 100</T></div><div className="w-[18px] rounded-[3px] bg-[#606060]">&gt;</div>
        </div>
        <div className="mt-[5px] flex h-[31px] border-t-2 border-[#101010]">
          <div className="flex w-[62px] items-center pl-[17px]"><I vb="0 0 20 14" className="h-[14px] w-[20px]"><path d="M2 1V14" stroke={G} strokeWidth="4" strokeDasharray="1.500 2" /><path d="M6 12Q9-5 12 7T18 5" stroke={TEAL} strokeWidth="1.400" /></I></div>
          <div className="relative h-[29px] w-[1785px] border-b border-[#383838] bg-[#2a2a2a]">
            <div className="absolute left-[2px] top-0 h-[29px] w-[10px] bg-[#85801f]" />
            {frames.map((f) => (
              <div key={f} className="absolute top-0 flex h-[29px] w-[41px] -translate-x-[20px] flex-col items-center" style={{ left: Math.round(6.5 + f * 17.71) }}>
                <div className={`w-px shrink-0 ${f % 5 ? 'h-[13px]' : 'h-[15px]'} ${f ? 'bg-[#6e6e6e]' : 'bg-[#b8b040]'}`} />
                {f % 5 === 0 && <span className={`-ml-[1px] leading-[14px] ${f ? 'text-[#b8b8b8]' : 'text-[#d8d040]'}`}>{f}</span>}
              </div>
            ))}
          </div>
        </div>
      </div>
    </div>
  );
}

const Fld = ({ w, children }: { w: number; children: string }) => (
  <div className="h-[21px] w-[71px] overflow-hidden border border-[#505050] bg-[#5a5a5a] pl-[2px] leading-[20px] text-[#8a8a8a]"><T w={w}>{children}</T></div>
);
const NavI = ({ flyout, children }: { flyout?: boolean; children: ReactNode }) => (
  <div className="relative h-[19px] w-[19px]"><I vb="0 0 19 19" className="h-[19px] w-[19px]">{children}</I>{flyout && <Fly className="absolute -bottom-[4px] -right-[4px]" />}</div>
);

function StatusBar() {
  return (
    <div className="flex h-[67px] pt-[1px] font-['Noto_Sans'] text-[12px] text-[#f0f0f0]">
      <div className="ml-[4px] mt-[3px] w-[123px]">
        <div className="h-[29px] border-2 border-[#888] border-b-[#eee] border-r-[#eee] bg-[#dcc5c5]" />
        <div className="mt-[1px] h-[29px] overflow-hidden border-2 border-[#888] border-b-[#eee] border-r-[#eee] bg-white pl-[4px] font-['Liberation_Mono'] text-[13px] leading-[19px] text-[#8a8a8a]"><div className="w-[112px] overflow-hidden"><T w={116}>MAXScript Min</T></div></div>
      </div>
      <div className="ml-[2px] mt-[1px] h-[62px] w-[3px] border-l border-r-2 border-l-[#555] border-r-black" />
      <T w={101} className="ml-[5px] mt-[10px]">1 Object Selected</T>
      <div className="ml-auto w-[546px] pt-[7px]">
        <div className="flex h-[23px] items-center">
          <I vb="0 0 18 18" className="h-[18px] w-[18px]"><path d="M1 5V1H5M13 1H17V5M17 13V17H13M5 17H1V13" stroke="#ddd" strokeWidth="1.400" /><rect x="5" y="5" width="8" height="8" fill={TEAL} /></I>
          <I vb="0 0 12 18" className="ml-[18px] h-[18px] w-[12px]"><path d="M2.500 9V4.500Q3 1 6 1Q9 1 9.500 4.500V9" stroke={G} strokeWidth="2" /><rect y="8" width="12" height="10" fill={G} /><path d="M6 10.500V15" stroke="#333" strokeWidth="2" /></I>
          <I vb="0 0 16 16" className="ml-[19px] h-[16px] w-[16px]"><rect x="1" y="1" width="14" height="14" stroke={G} strokeWidth="2" /><path d="M8 0V5M8 11V16M0 8H5M11 8H16" stroke={G} strokeWidth="1.400" /><path d="M6 4.500H10L11.500 8L10 11.500H6L4.500 8Z" fill="#444" stroke={G} strokeWidth="1.600" /></I>
          <T w={13} className="ml-[11px] mr-[4px]">X:</T><Fld w={67}>-356,878cm</Fld>
          <T w={12} className="ml-[15px] mr-[5px]">Y:</T><Fld w={67}>-556,337cm</Fld>
          <T w={12} className="ml-[15px] mr-[5px]">Z:</T><Fld w={35}>0,0cm</Fld>
          <T w={82} className="ml-[17px]">Grid = 25,4cm</T>
        </div>
        <div className="mt-[7px] flex h-[25px] items-center">
          <div className="ml-[375px] h-[21px] w-px bg-black" />
          <div className="ml-[1px] flex h-[25px] w-[26px] items-center justify-center rounded-[3px] bg-[#5d89c0]"><I vb="0 0 16 16" className="h-[16px] w-[16px]"><g stroke="#333" strokeWidth="2.800"><path d="M8 1L14.500 4.500V11.500L8 15L1.500 11.500V4.500Z" /></g><path d="M8 1L14.500 4.500V11.500L8 15L1.500 11.500V4.500ZM4 6L8 8L12 6M8 8V12.500M4 6V10L8 12.500L12 10V6L8 4Z" stroke={G} strokeWidth="1.100" /></I></div>
          <T w={81} className="ml-[6px] text-[#d8d8d8]">Add Time Tag</T>
        </div>
      </div>
      <div className="w-[158px] pt-[5px]">
        <div className="flex h-[23px] items-center">
          <I vb="0 0 18 14" className="h-[14px] w-[18px]"><path d="M0 0H3V14H0ZM10 1V13L4 7ZM18 1V13L11 7Z" fill={G} /></I>
          <Sep ml="ml-[6px]" h="h-[20px]" />
          <I vb="0 0 18 14" className="ml-[6px] h-[14px] w-[18px]"><path d="M9 1V13L0 7ZM10.500 0H13.500V14H10.500ZM15 0H18V14H15Z" fill={G} /></I>
          <div className="relative ml-[11px]"><I vb="0 0 15 18" className="h-[18px] w-[15px]"><path d="M0 0L15 9L0 18Z" fill={G} /></I><Fly className="absolute -bottom-[3px] -right-[5px]" /></div>
          <I vb="0 0 18 14" className="ml-[12px] h-[14px] w-[18px]"><path d="M9 1V13L18 7ZM0 0H3V14H0ZM4.500 0H7.500V14H4.500Z" fill={G} /></I>
          <Sep ml="ml-[7px]" h="h-[20px]" />
          <I vb="0 0 18 14" className="ml-[6px] h-[14px] w-[18px]"><path d="M15 0H18V14H15ZM0 1V13L6 7ZM7 1V13L14 7Z" fill={G} /></I>
        </div>
        <div className="mt-[5px] flex h-[22px] items-center">
          <I vb="0 0 16 10" className="ml-[1px] h-[10px] w-[16px]"><path d="M6 0V10L0 5ZM10 0V10L16 5Z" fill={G} /></I>
          <Sep ml="ml-[7px]" h="h-[20px]" />
          <div className="ml-[1px] flex h-[21px] w-[87px] items-center justify-between border border-[#555] bg-[#646464] pl-[4px] pr-[3px] text-[#d0d0d0]"><span>0</span><I vb="0 0 6 12" className="h-[12px] w-[6px]"><path d="M3 0L6 4.500H0ZM0 7.500H6L3 12Z" fill="#dcdcdc" /></I></div>
          <Sep ml="ml-[1px]" h="h-[20px]" />
          <I vb="0 0 19 19" className="ml-[7px] h-[19px] w-[19px]"><circle cx="7.500" cy="7.500" r="7.500" fill={G} /><path d="M8 3V8H12" stroke="#444" strokeWidth="1.600" /><Gear cx={13.500} cy={13.500} r={4.500} /></I>
        </div>
      </div>
      <div className="mt-[5px] flex h-[54px] w-[53px] items-center justify-center rounded-[4px] bg-[#646464]"><I vb="0 0 34 36" className="h-[36px] w-[34px]"><path d="M12 0H19V13H31V19H19V32H12V19H0V13H12Z" fill={G} stroke="#444" strokeWidth="1.200" /><path d="M33 18L23 29M29 18L33 22" stroke="#333" strokeWidth="4.600" /><circle cx="21" cy="31" r="4" stroke="#333" strokeWidth="4.600" /><path d="M33 18L23 29M29 18L33 22" stroke={TEAL} strokeWidth="2.600" /><circle cx="21" cy="31" r="4" stroke={TEAL} strokeWidth="2.600" /></I></div>
      <div className="ml-[5px] mt-[5px] w-[58px]"><Btn cls="!h-[25px] pt-[1px]" w={26}>Auto</Btn><Btn cls="mt-[2px] !h-[25px] pt-[1px]" w={34}>Set K.</Btn></div>
      <div className="ml-[4px] mt-[5px] w-[144px]">
        <div className="flex h-[22px] items-center justify-between border border-[#565656] bg-[#606060] px-[8px] text-[#d0d0d0]"><T w={49}>Selected</T><Down /></div>
        <div className="mt-[6px] flex h-[25px] items-center">
          <div className="relative ml-[4px]"><I vb="0 0 19 20" className="h-[20px] w-[19px]"><path d="M1 19Q7 14 6 4M18 19Q12 14 13 4" stroke={TEAL} strokeWidth="2" /><path d="M2 3.500H17" stroke={G} strokeWidth="1.400" /><rect x="7" y="1" width="5" height="5" fill="#444" stroke={G} strokeWidth="1.300" /><circle cx="1.500" cy="3.500" r="1.500" fill={G} /><circle cx="17.500" cy="3.500" r="1.500" fill={G} /></I><Fly className="absolute -bottom-[3px] -right-[4px]" /></div>
          <Btn cls="ml-[8px] w-[110px] !h-[25px] pt-[1px]" w={46}>Filters...</Btn>
        </div>
      </div>
      <div className="ml-[14px] mr-[19px] mt-[7px] grid grid-cols-4 grid-rows-2 content-start gap-x-[9px] gap-y-[8px] self-start">
        <NavI><circle cx="12" cy="7" r="5.500" stroke={G} strokeWidth="2.400" /><path d="M8 11L1 18" stroke={G} strokeWidth="3" /></NavI>
        <NavI><path d="M8 0H13V6H8ZM14 0H19V6H14ZM14 7H19V13H14Z" fill={TEAL} /><circle cx="8" cy="10" r="4" fill="#444" stroke={G} strokeWidth="2.200" /><path d="M5 13L0 18" stroke={G} strokeWidth="2.600" /></NavI>
        <NavI flyout><path d="M1 4V1H4M15 1H18V4M18 15V18H15M4 18H1V15" stroke="#ddd" strokeWidth="1.300" /><path d="M9.500 2L16 5.500V13L9.500 16.500L3 13V5.500Z" fill={TEAL} /><path d="M3 5.500L9.500 9L16 5.500M9.500 9V16.500" stroke="#333" /></NavI>
        <NavI flyout><path d="M14 0L19 2.500V11L14 14L9.500 11V2.500Z" fill={TEAL} /><path d="M14 4V14" stroke="#333" /><path d="M5 7L8 10L5 13L2 10ZM2 11L5 14L2 17L-1 14ZM8 11L11 14L8 17L5 14Z" fill={G} /></NavI>
        <NavI><rect x="1" y="1" width="17" height="14" stroke="#ddd" strokeWidth="1.500" strokeDasharray="2.500 2" /><rect x="0" y="9" width="8" height="9" fill="#444" /><circle cx="10" cy="9" r="4" fill="#444" stroke={TEAL} strokeWidth="2.200" /><path d="M7 12L1 18" stroke={TEAL} strokeWidth="2.600" /></NavI>
        <NavI flyout><path d="M5 18L0 10L2 9L5 12V3Q6 1.500 7 3V9L8 1Q9-.5 10 1V9L11.500 2Q13 1 13 3V10L14.500 5Q16 4 16 6V13L13 19H6Z" fill={G} /></NavI>
        <NavI flyout><circle cx="8.500" cy="8.500" r="7" fill={G} /><path d="M1.500 9Q2 2 9 1.500V9Z" fill={TEAL} /><path d="M9 2V16M2 9H16" stroke="#444" /><path d="M18 1Q20 4 8 14Q2 18 1 16" stroke="#444" strokeWidth="3" /><path d="M18 1Q20 4 8 14Q2 18 1 16" stroke={G} strokeWidth="1.400" /></NavI>
        <NavI><rect x="1" y="1" width="17" height="17" fill={G} /><rect x="1" y="10" width="8" height="8" fill="#9a9a9a" stroke="#444" /><path d="M8 11L14 5M9 4H15V10" stroke="#222" strokeWidth="2" /></NavI>
      </div>
    </div>
  );
}

const Adobe = ({ c, cls }: { c: string; cls: string }) => (
  <div className={`flex h-[27px] w-[28px] items-center justify-center border-2 font-['Open_Sans'] text-[16px] font-semibold leading-none tracking-[-0.5px] ${cls}`}>{c}</div>
);
const APPS: { n: string; run?: boolean; on?: boolean; icon: ReactNode }[] = [
  { n: 'view', icon: <I vb="0 0 24 20" className="h-[20px] w-[24px]"><rect x="4" y="1" width="16" height="18" stroke="#fff" strokeWidth="1.300" /><path d="M3 4H.7V16H3M21 4H23.300V16H21" stroke="#fff" strokeWidth="1.300" /></I> },
  { n: 'files', run: true, icon: <I vb="0 0 28 24" className="h-[24px] w-[28px]"><path d="M0 2H10L12 5H28V22H0Z" fill="#fbdf8a" /><path d="M0 2H10L12 5H0Z" fill="#f0b429" /><path d="M5 24V14Q5 12.500 7 12.500H21Q23 12.500 23 14V24H19V17H9V24Z" fill="#3aa5d8" /></I> },
  { n: 'word', icon: <I vb="0 0 28 26" className="h-[26px] w-[28px]"><path d="M14 3H27V23H14Z" fill="#fff" stroke="#2b579a" /><path d="M16 7H25M16 10H25M16 13H25M16 16H25M16 19H25" stroke="#2b579a" strokeWidth="1.300" /><path d="M0 3L16 0V26L0 23Z" fill="#2b579a" /><text x="2" y="18" fill="#fff" fontFamily="Open Sans" fontWeight="700" fontSize="13">W</text></I> },
  { n: 'acrobat', run: true, icon: <I vb="0 0 28 27" className="h-[27px] w-[28px]"><rect x="1" y="1" width="26" height="25" fill="#220505" stroke="#c5281c" strokeWidth="2" /><path d="M13 6Q15 5 14.500 9Q13 17 8 20Q6 21 7 19Q12 15 20 16Q23 17 20 18Q14 15 12.500 8Q12.500 6 13 6Z" stroke="#e4e4e4" strokeWidth="1.300" /></I> },
  { n: 'autocad', icon: <I vb="0 0 30 30" className="h-[30px] w-[30px]"><rect width="30" height="30" fill="#f6e7e5" /><path d="M13 3H19L25 25H19L17 19L10 22L7 26H4Z" fill="#b3232b" /><path d="M15 9L11 18L17 15Z" fill="#f6e7e5" /></I> },
  { n: 'max', run: true, on: true, icon: <div className="flex h-[30px] w-[30px] flex-col items-center bg-[#e4f1f1] font-['Open_Sans'] font-extrabold text-[#159199]"><span className="text-[25px] leading-[23px]">3</span><span className="ml-[12px] text-[6px] leading-[6px]">MAX</span></div> },
  { n: 'ps', icon: <Adobe c="Ps" cls="border-[#1fa3d8] bg-[#001d26] text-[#25b4ea]" /> },
  { n: 'ae', icon: <Adobe c="Ae" cls="border-[#a97ee8] bg-[#1f0040] text-[#c79bff]" /> },
  { n: 'pr', icon: <Adobe c="Pr" cls="border-[#b85bd8] bg-[#2a0034] text-[#e07bff]" /> },
  { n: 'id', icon: <Adobe c="Id" cls="border-[#d4337c] bg-[#2e0015] text-[#f0408c]" /> },
  { n: 'an', icon: <Adobe c="An" cls="border-[#cc331c] bg-[#280300] text-[#ef4423]" /> },
  { n: 'ai', icon: <Adobe c="Ai" cls="border-[#d87a14] bg-[#261300] text-[#ff8a0c]" /> },
  { n: 'chrome', run: true, icon: <I className="h-[28px] w-[28px]"><circle cx="14" cy="14" r="14" fill="#4caf50" /><path d="M1.900 7A14 14 0 0 1 26.100 7H14A7 7 0 0 0 7.900 10.500L7 16Z" fill="#de4b3c" /><path d="M26.500 8A14 14 0 0 1 12.500 28L19.500 17.500Q22 12 17 8Z" fill="#fdd04a" /><circle cx="14" cy="14" r="6.500" fill="#fff" /><circle cx="14" cy="14" r="5" fill="#4285f4" /></I> },
  { n: 'spotify', run: true, icon: <I className="h-[28px] w-[28px]"><circle cx="14" cy="14" r="14" fill="#1fd760" /><path d="M5 10Q14 6.500 23.500 11.500M6 14.500Q14 12 21.500 16M7 19Q14 17 19.500 20" stroke="#0a1a10" strokeWidth="2.400" strokeLinecap="round" /></I> },
  { n: 'paint', run: true, icon: <I vb="0 0 30 28" className="h-[28px] w-[30px]"><path d="M14 4Q27 5 26 16Q24 27 13 26Q8 25 10 20Q9 16 4 19Q0 19 1 14Q4 4 14 4Z" fill="#b5dcf0" stroke="#7fb0cc" strokeWidth=".6" /><circle cx="6" cy="14" r="2.400" fill="#d84a3a" /><circle cx="10" cy="9.500" r="2.400" fill="#4caf50" /><circle cx="16" cy="8" r="2.400" fill="#f4c430" /><path d="M23 8L14 27" stroke="#d88a34" strokeWidth="2.400" /><path d="M21 3L26 0L28 5L24 9L22 7Z" fill="#c58a58" /></I> },
];

function Taskbar() {
  return (
    <div className="flex h-[50px] bg-gradient-to-r from-[#060806] via-[#0a0b09] to-[#0b0b0c] text-white">
      <div className="flex w-[60px] items-center justify-center"><I vb="0 0 20 20" className="h-[20px] w-[20px]"><path d="M0 3L8.500 1.700V9.500H0ZM9.500 1.500L20 0V9.500H9.500ZM0 10.500H8.500V18.300L0 17ZM9.500 10.500H20V20L9.500 18.500Z" fill="#fff" /></I></div>
      <div className="mr-[1px] flex w-[430px] items-center border-t border-[#c4c4c4] bg-[#f2f2f2]">
        <div className="ml-[11px] h-[28px] w-[28px] rounded-full border-4 border-black" />
        <T w={246} className="ml-[11px] font-['Open_Sans'] text-[18px] text-[#3c3c3c]">Scrivi qui per eseguire la ricerca</T>
        <I vb="0 0 14 20" className="ml-auto mr-[19px] h-[20px] w-[14px]"><rect x="4" y=".7" width="6" height="12" rx="1" stroke="#333" strokeWidth="1.400" /><path d="M1 8V13Q1 15.500 4 15.500H10Q13 15.500 13 13V8M7 15.500V19M3.500 19H10.500" stroke="#333" strokeWidth="1.400" /></I>
      </div>
      {APPS.map((a) => (
        <div key={a.n} className={`flex w-[62px] shrink-0 flex-col items-center ${a.on ? 'border-r-2 border-[#26292a] bg-[#424444]' : ''}`}>
          <div className="flex h-[47px] items-center">{a.icon}</div>
          {a.run && <div className={`h-[3px] bg-[#8fdde0] ${a.on ? 'w-[62px]' : 'w-[51px]'}`} />}
        </div>
      ))}
      <div className="ml-auto flex items-center">
        <I vb="0 0 20 20" className="h-[20px] w-[20px]"><g stroke="#fff" strokeWidth="1.400"><circle cx="6" cy="9" r="3.300" /><path d="M1 19Q1 12.500 6 12.500Q8 12.500 9 15" /><circle cx="14" cy="4" r="3.300" /><path d="M9 12Q10 7.500 14 7.500Q19 8 19 13" /></g></I>
        <I vb="0 0 16 9" className="ml-[26px] h-[9px] w-[16px]"><path d="M.5 8.500L8 1L15.500 8.500" stroke="#fff" strokeWidth="1.400" /></I>
        <I vb="0 0 20 14" className="ml-[12px] h-[14px] w-[20px]"><rect x="4.500" y="3.500" width="13" height="9" fill="#fff" stroke="#fff" /><path d="M19.300 6V10" stroke="#fff" strokeWidth="1.400" /><path d="M1 0V3M4.500 0V3M0 3.500H5.500V6H0ZM3 6V9" stroke="#fff" /></I>
        <I vb="0 0 16 16" className="ml-[13px] h-[16px] w-[16px]"><g stroke="#fff" strokeWidth="1.400"><path d="M1 15Q1 2 15 1" opacity=".6" /><path d="M4.500 15Q5 6 15 5M8 15Q9 10 15 9M11.500 15Q12 13 15 12.500" /></g></I>
        <I vb="0 0 20 16" className="ml-[10px] h-[16px] w-[20px]"><g stroke="#fff" strokeWidth="1.300"><path d="M1 5H4L8 1.500V14.500L4 11H1Z" /><path d="M10.500 6Q12 8 10.500 10" /><path d="M13 4Q16 8 13 12" opacity=".7" /><path d="M16 2Q20 8 16 14" opacity=".5" /></g></I>
        <div className="ml-[13px] flex w-[78px] flex-col items-center font-['Open_Sans'] text-[14px] leading-[23px]"><T w={34}>18:26</T><T w={76}>30/01/2018</T></div>
        <div className="relative ml-[22px] mr-[24px]"><I vb="0 0 21 20" className="h-[20px] w-[21px]"><path d="M0 0H21V16H8L4 20V16H0Z" fill="#fff" /><path d="M4 4.500H17M4 8H17M4 11.500H13" stroke="#111" strokeWidth="1.400" /></I><div className="absolute left-[9px] top-[10px] flex h-[20px] w-[20px] items-center justify-center rounded-full border border-[#999] bg-[#2e2e2e] font-['Open_Sans'] text-[13px] font-semibold">1</div></div>
        <div className="mr-[5px] h-[50px] w-px bg-[#666]" />
      </div>
    </div>
  );
}

export default function App() {
  return (
    <div className="flex h-[1080px] w-[1920px] flex-col overflow-hidden bg-[#444]">
      <TitleBar />
      <MenuBar />
      <MainToolbar />
      <Ribbon />
      <div className="flex h-[755px]">
        <LeftPanel />
        <Viewport />
        <CommandPanel />
      </div>
      <TimeTrack />
      <StatusBar />
      <Taskbar />
    </div>
  );
}
